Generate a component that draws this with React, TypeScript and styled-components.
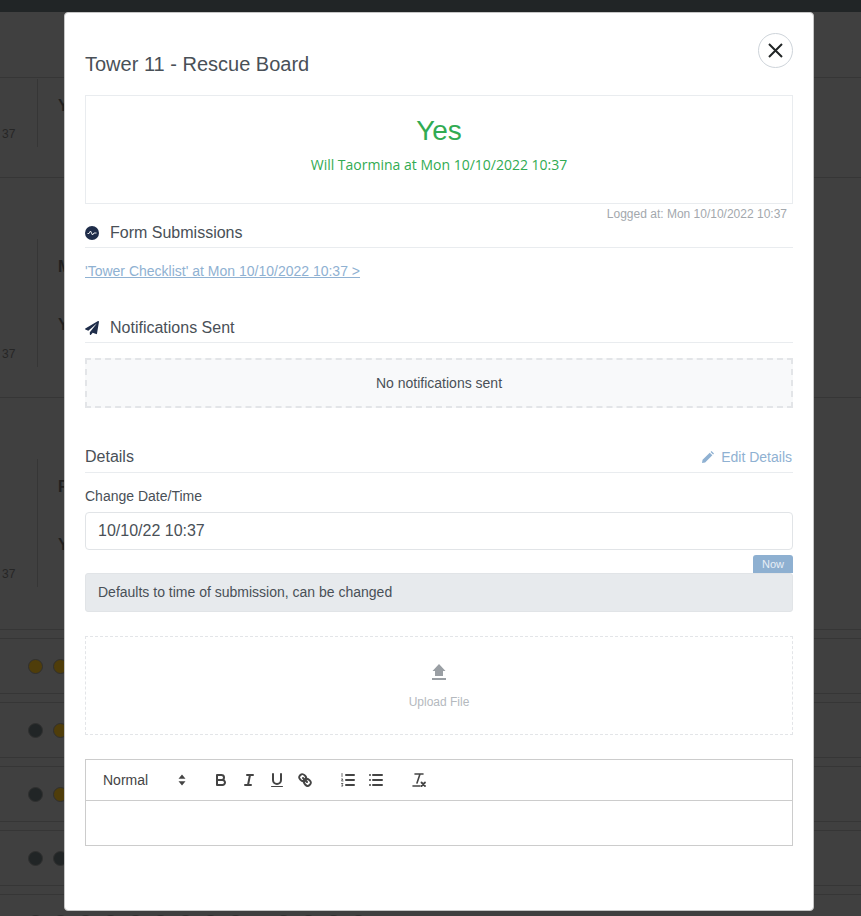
import React from "react";
import styled, { createGlobalStyle } from "styled-components";
import { FaPaperPlane } from "react-icons/fa";

const GlobalStyle = createGlobalStyle`
  html, body {
    margin: 0;
    padding: 0;
    height: 100%;
    overflow: hidden;
    background: #404040;
    font-family: "Liberation Sans", Arial, sans-serif;
  }
  * { box-sizing: border-box; }
`;

/* page behind the modal */
const Page = styled.div`
  height: 916px;
  overflow: hidden;
  background: #404040;
  color: #1e2122;
`;

const TopBar = styled.div`
  height: 12px;
  background: #212526;
`;

const HeaderBand = styled.div`
  height: 66px;
  border-bottom: 1px solid #363636;
`;

const EntryRow = styled.div<{ $height: number; $pad: number }>`
  height: ${(p) => p.$height}px;
  padding-top: ${(p) => p.$pad}px;
  display: flex;
  border-bottom: 1px solid #363636;
`;

const TimeCol = styled.div<{ $rule: number }>`
  width: 38px;
  height: ${(p) => p.$rule}px;
  border-right: 1px solid #363636;
  display: flex;
  align-items: flex-end;
  padding: 0 0 7px 2px;
  font-size: 12px;
  line-height: 12px;
  color: #262626;
`;

const AnswerCol = styled.div<{ $top: number }>`
  padding: ${(p) => p.$top}px 0 0 20px;
  display: flex;
  flex-direction: column;
  gap: 40px;
  font-size: 16px;
  line-height: 18px;
  font-weight: 700;
  color: #1f1f1f;
`;

const DotRow = styled.div`
  height: 56px;
  margin-bottom: 8px;
  border-top: 1px solid #363636;
  border-bottom: 1px solid #363636;
  display: flex;
  align-items: center;
  gap: 10px;
  padding-left: 28px;
`;

const Dot = styled.span<{ $gold?: boolean }>`
  width: 15px;
  height: 15px;
  border-radius: 50%;
  background: ${(p) => (p.$gold ? "#4f3d0a" : "#212526")};
  border: 1px solid #303030;
`;

const DotGap = styled.span`
  width: 13px;
`;

const Spacer = styled.div<{ $h: number }>`
  height: ${(p) => p.$h}px;
`;

/* modal */
const Modal = styled.div`
  position: fixed;
  left: 64px;
  top: 12px;
  width: 750px;
  height: 899px;
  background: #fff;
  border: 1px solid #c6c6c6;
  border-radius: 4px;
  padding: 20px;
  color: #495057;
`;

const TitleRow = styled.div`
  height: 62px;
  padding-top: 19px;
  font-size: 20px;
  line-height: 24px;
  color: #495057;
`;

const CloseButton = styled.button`
  position: absolute;
  top: 20px;
  right: 20px;
  width: 35px;
  height: 35px;
  padding: 0;
  border-radius: 50%;
  border: 1px solid #ced4da;
  background: #fff;
  display: flex;
  align-items: center;
  justify-content: center;
`;

const ResultBox = styled.div`
  height: 109px;
  border: 1px solid #e9ecef;
  display: flex;
  flex-direction: column;
  align-items: center;
  padding-top: 19px;
`;

const ResultValue = styled.div`
  font-size: 28px;
  line-height: 32px;
  color: #31ab52;
`;

const ResultBy = styled.div`
  margin-top: 8px;
  font-family: "Open Sans", sans-serif;
  font-size: 14px;
  line-height: 19px;
  color: #31ab52;
`;

const LoggedAt = styled.div`
  text-align: right;
  padding: 3px 6px 0 0;
  height: 17px;
  font-size: 12px;
  line-height: 14px;
  color: #a3a8ad;
`;

const SectionHeader = styled.div<{ $height?: number; $bottom?: number }>`
  height: ${(p) => p.$height ?? 27}px;
  border-bottom: 1px solid #e9ecef;
  display: flex;
  align-items: center;
  justify-content: space-between;
  font-size: 16px;
  line-height: 20px;
  padding-bottom: ${(p) => p.$bottom ?? 3}px;
`;

const SectionTitle = styled.div`
  display: flex;
  align-items: center;
  gap: 11px;
`;

const PlaneIcon = styled(FaPaperPlane)`
  width: 14px;
  height: 14px;
  color: #1f2d4a;
`;

const SubmissionLink = styled.a`
  display: block;
  margin-top: 15px;
  height: 53px;
  font-size: 14px;
  line-height: 16px;
  color: #8fb1d2;
  text-decoration: underline;
`;

const EmptyBox = styled.div`
  margin-top: 15px;
  height: 50px;
  background: #f8f9fa;
  border: 2px dashed #e3e5e8;
  display: flex;
  align-items: center;
  justify-content: center;
  font-size: 14px;
`;

const EditLink = styled.a`
  display: flex;
  align-items: center;
  gap: 7px;
  padding-right: 1px;
  font-size: 14px;
  color: #8fb1d2;
`;

const FieldLabel = styled.label`
  display: block;
  margin-top: 15px;
  font-size: 14px;
  line-height: 17px;
`;

const DateInput = styled.div`
  margin-top: 7px;
  height: 38px;
  border: 1px solid #e1e4e7;
  border-radius: 4px;
  padding: 0 12px;
  display: flex;
  align-items: center;
  font-size: 16px;
`;

const NowRow = styled.div`
  display: flex;
  justify-content: flex-end;
  margin-top: 5px;
`;

const NowBadge = styled.span`
  width: 40px;
  height: 18px;
  background: #8eb0d1;
  color: #e8eef5;
  border-radius: 3px 3px 0 0;
  font-size: 11px;
  line-height: 18px;
  text-align: center;
`;

const HintBar = styled.div`
  height: 39px;
  background: #e7eaed;
  border: 1px solid #e1e4e7;
  border-radius: 3px;
  padding: 0 12px 1px;
  display: flex;
  align-items: center;
  font-size: 14px;
`;

const UploadBox = styled.div`
  margin-top: 24px;
  height: 99px;
  border: 1px dashed #e3e5e8;
  display: flex;
  flex-direction: column;
  align-items: center;
  padding-top: 27px;
  gap: 15px;
  font-size: 12px;
  line-height: 14px;
  color: #b4b9be;
`;

const Editor = styled.div`
  margin-top: 24px;
  height: 87px;
  border: 1px solid #ccc;
`;

const Toolbar = styled.div`
  height: 41px;
  border-bottom: 1px solid #ccc;
  display: flex;
  align-items: center;
  padding-left: 17px;
  color: #444;
`;

const HeaderPicker = styled.div`
  width: 88px;
  margin-right: 21px;
  padding-right: 5px;
  display: flex;
  align-items: center;
  justify-content: space-between;
  font-size: 14px;
`;

const ToolButton = styled.span<{ $gap?: number }>`
  display: flex;
  width: 18px;
  height: 18px;
  margin-right: ${(p) => p.$gap ?? 10}px;
`;

const Stroke = styled.svg`
  width: 18px;
  height: 18px;
  fill: none;
  stroke: #444;
  stroke-width: 2;
  stroke-linecap: round;
  stroke-linejoin: round;
`;

const ThinStroke = styled(Stroke)`
  stroke-width: 1.6;
`;

function App() {
  return (
    <>
      <GlobalStyle />
      <Page>
        <TopBar />
        <HeaderBand />
        <EntryRow $height={100} $pad={1}>
          <TimeCol $rule={68}>37</TimeCol>
          <AnswerCol $top={18}>
            <span>Y</span>
          </AnswerCol>
        </EntryRow>
        <EntryRow $height={220} $pad={61}>
          <TimeCol $rule={128}>37</TimeCol>
          <AnswerCol $top={19}>
            <span>M</span>
            <span>Y</span>
          </AnswerCol>
        </EntryRow>
        <EntryRow $height={232} $pad={61}>
          <TimeCol $rule={128}>37</TimeCol>
          <AnswerCol $top={19}>
            <span>R</span>
            <span>Y</span>
          </AnswerCol>
        </EntryRow>
        <Spacer $h={8} />
        <DotRow>
          <Dot $gold />
          <Dot $gold />
        </DotRow>
        <DotRow>
          <Dot />
          <Dot $gold />
        </DotRow>
        <DotRow>
          <Dot />
          <Dot $gold />
        </DotRow>
        <DotRow>
          <Dot />
          <Dot />
        </DotRow>
        <DotRow>
          {Array.from({ length: 9 }).map((_, i) => (
            <Dot key={i} />
          ))}
          <DotGap />
          {Array.from({ length: 4 }).map((_, i) => (
            <Dot key={i} />
          ))}
        </DotRow>
      </Page>

      <Modal>
        <TitleRow>Tower 11 - Rescue Board</TitleRow>
        <CloseButton aria-label="Close">
          <svg width="15" height="15" viewBox="0 0 15 15" stroke="#212526" strokeWidth="2" fill="none">
            <path d="M1 1l13 13M14 1L1 14" />
          </svg>
        </CloseButton>

        <ResultBox>
          <ResultValue>Yes</ResultValue>
          <ResultBy>Will Taormina at Mon 10/10/2022 10:37</ResultBy>
        </ResultBox>
        <LoggedAt>Logged at: Mon 10/10/2022 10:37</LoggedAt>

        <SectionHeader>
          <SectionTitle>
            <svg width="14" height="14" viewBox="0 0 14 14">
              <circle cx="7" cy="7" r="7" fill="#1f2d4a" />
              <path d="M2.5 7.5h1.5l1.5-2.5 2 4 1.5-2h2.5" fill="none" stroke="#fff" strokeWidth="0.9" />
            </svg>
            Form Submissions
          </SectionTitle>
        </SectionHeader>
        <SubmissionLink>'Tower Checklist' at Mon 10/10/2022 10:37 &gt;</SubmissionLink>

        <SectionHeader>
          <SectionTitle>
            <PlaneIcon />
            Notifications Sent
          </SectionTitle>
        </SectionHeader>
        <EmptyBox>No notifications sent</EmptyBox>

        <Spacer $h={33} />
        <SectionHeader $height={32} $bottom={0}>
          <span>Details</span>
          <EditLink>
            <svg width="12" height="12" viewBox="0 0 13 13">
              <path d="M0 13l.6-3.4L8.4 1.8l2.8 2.8L3.4 12.4zM9.3 1L10.3 0 13 2.7 12 3.7z" fill="#8fb1d2" />
            </svg>
            Edit Details
          </EditLink>
        </SectionHeader>

        <FieldLabel>Change Date/Time</FieldLabel>
        <DateInput>10/10/22 10:37</DateInput>
        <NowRow>
          <NowBadge>Now</NowBadge>
        </NowRow>
        <HintBar>Defaults to time of submission, can be changed</HintBar>

        <UploadBox>
          <svg width="14" height="16" viewBox="0 0 14 16">
            <path d="M7 0l6.5 7H11v5H3V7H.5zM0 14h14v2H0z" fill="#9a9fa4" />
          </svg>
          Upload File
        </UploadBox>

        <Editor>
          <Toolbar>
            <HeaderPicker>
              Normal
              <svg width="8" height="12" viewBox="0 0 8 12">
                <path d="M4 .5L7.5 4.8H.5zM4 11.5L.5 7.2h7z" fill="#444" />
              </svg>
            </HeaderPicker>
            <ToolButton>
              <Stroke viewBox="0 0 18 18">
                <path d="M5,4H9.5A2.5,2.5,0,0,1,12,6.5v0A2.5,2.5,0,0,1,9.5,9H5V4Z" />
                <path d="M5,9h5.5A2.5,2.5,0,0,1,13,11.5v0A2.5,2.5,0,0,1,10.5,14H5V9Z" />
              </Stroke>
            </ToolButton>
            <ToolButton>
              <Stroke viewBox="0 0 18 18">
                <path d="M7 4h6M5 14h6M8 14l2-10" />
              </Stroke>
            </ToolButton>
            <ToolButton>
              <Stroke viewBox="0 0 18 18">
                <path d="M5,3V9a4,4,0,0,0,4,4h0a4,4,0,0,0,4-4V3" />
                <rect x="3" y="15" width="12" height="1" rx=".5" fill="#444" stroke="none" />
              </Stroke>
            </ToolButton>
            <ToolButton $gap={25}>
              <Stroke viewBox="0 0 18 18">
                <path d="M7 7l4 4" />
                <path d="M8.9,4.577a3.476,3.476,0,0,1,.36,4.679A3.476,3.476,0,0,1,4.577,8.9C3.185,7.5,2.035,6.4,4.217,4.217S7.5,3.185,8.9,4.577Z" />
                <path d="M13.423,9.1a3.476,3.476,0,0,0-4.679-.36,3.476,3.476,0,0,0,.36,4.679c1.392,1.392,2.5,2.542,4.679.36S14.815,10.5,13.423,9.1Z" />
              </Stroke>
            </ToolButton>
            <ToolButton>
              <Stroke viewBox="0 0 18 18">
                <path d="M7 4h8M7 9h8M7 14h8" />
                <path d="M3 2.5v3M2.5 8h1.4l-1.4 2h1.6M2.5 12.5h1.5l-.8 1.2.8 1.3h-1.5" strokeWidth="0.8" />
              </Stroke>
            </ToolButton>
            <ToolButton $gap={25}>
              <Stroke viewBox="0 0 18 18">
                <path d="M6 4h9M6 9h9M6 14h9M3 4h0M3 9h0M3 14h0" />
              </Stroke>
            </ToolButton>
            <ToolButton>
              <ThinStroke viewBox="0 0 18 18">
                <path d="M5 3h8M3 15h7M10 3l-3 9" />
                <path d="M11.5 11.5l3.5 3.5M15 11.5l-3.5 3.5" strokeWidth="1.8" />
              </ThinStroke>
            </ToolButton>
          </Toolbar>
        </Editor>
      </Modal>
    </>
  );
}

export default App;
